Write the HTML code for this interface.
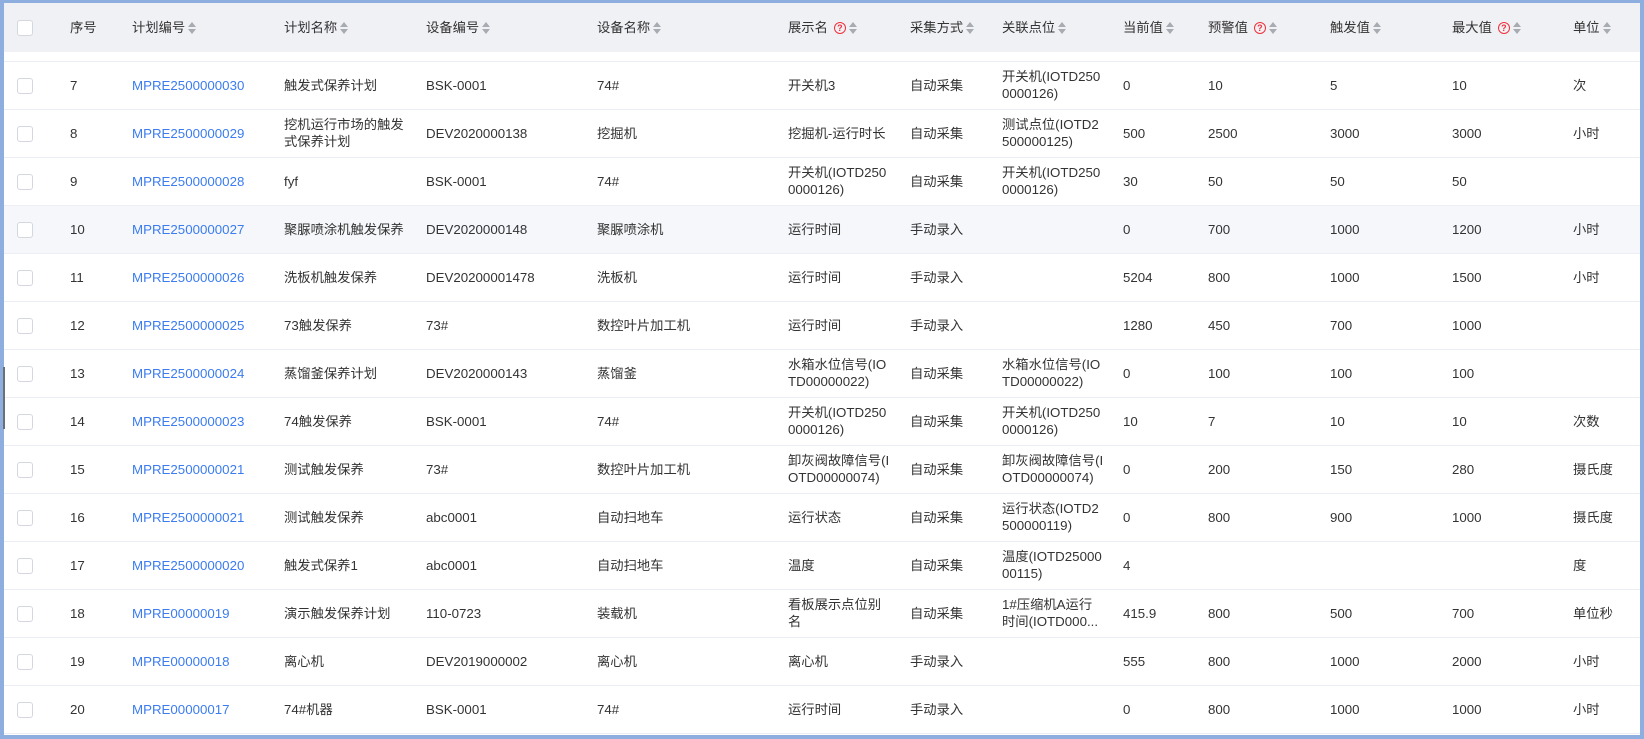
<!DOCTYPE html>
<html><head><meta charset="utf-8">
<style>
*{box-sizing:border-box;margin:0;padding:0}
html,body{width:1644px;height:739px;overflow:hidden;background:#8eaee0}
body{font-family:"Liberation Sans","Noto Sans CJK SC",sans-serif;font-size:13.3px;color:#333}
.frame{position:absolute;left:4px;top:3px;width:1636px;height:732px;background:#fff;overflow:hidden}
table{border-collapse:collapse;table-layout:fixed;width:1636px}
td,th{padding:0;text-align:left;vertical-align:middle;white-space:nowrap;font-weight:normal;line-height:17px}
thead th{background:#f0f1f5;height:49px;color:#333}
tr.gap td{height:9px;border-bottom:1px solid #ebeef5}
tbody tr.r td{height:48px;border-bottom:1px solid #ebeef5}
tr.hl td{background:#f5f7fa}
.cb{display:inline-block;width:16px;height:16px;border:1px solid #d4d7de;border-radius:3px;background:#fff;margin-left:13px;vertical-align:middle}
a{color:#3b7cf0;text-decoration:none}
.s{display:inline-block;width:8px;height:12px;position:relative;vertical-align:middle;margin-left:3px}
.s:before{content:"";position:absolute;left:0;top:0;border-left:4px solid transparent;border-right:4px solid transparent;border-bottom:5px solid #a8abb2}
.s:after{content:"";position:absolute;left:0;bottom:0;border-left:4px solid transparent;border-right:4px solid transparent;border-top:5px solid #a8abb2}
.q{display:inline-block;width:12px;height:12px;border:1.3px solid #f0303a;border-radius:50%;color:#f0303a;font-size:9px;line-height:10px;text-align:center;font-weight:bold;vertical-align:middle;margin-left:6px}
.bar{position:absolute;left:3px;top:367px;width:2px;height:62px;background:#6b6f78}
</style></head><body>
<div class="frame">
<table>
<colgroup><col style="width:66px"><col style="width:62px"><col style="width:152px"><col style="width:142px"><col style="width:171px"><col style="width:191px"><col style="width:122px"><col style="width:92px"><col style="width:121px"><col style="width:85px"><col style="width:122px"><col style="width:122px"><col style="width:121px"><col style="width:67px"></colgroup>
<thead><tr>
<th><span class="cb"></span></th><th>序号</th><th>计划编号<span class="s"></span></th><th>计划名称<span class="s"></span></th><th>设备编号<span class="s"></span></th><th>设备名称<span class="s"></span></th><th>展示名<span class="q">?</span><span class="s"></span></th><th>采集方式<span class="s"></span></th><th>关联点位<span class="s"></span></th><th>当前值<span class="s"></span></th><th>预警值<span class="q">?</span><span class="s"></span></th><th>触发值<span class="s"></span></th><th>最大值<span class="q">?</span><span class="s"></span></th><th>单位<span class="s"></span></th>
</tr></thead>
<tbody>
<tr class="gap"><td colspan="14"></td></tr>
<tr class="r"><td><span class="cb"></span></td><td>7</td><td><a>MPRE2500000030</a></td><td>触发式保养计划</td><td>BSK-0001</td><td>74#</td><td>开关机3</td><td>自动采集</td><td>开关机(IOTD250<br>0000126)</td><td>0</td><td>10</td><td>5</td><td>10</td><td>次</td></tr>
<tr class="r"><td><span class="cb"></span></td><td>8</td><td><a>MPRE2500000029</a></td><td>挖机运行市场的触发<br>式保养计划</td><td>DEV2020000138</td><td>挖掘机</td><td>挖掘机-运行时长</td><td>自动采集</td><td>测试点位(IOTD2<br>500000125)</td><td>500</td><td>2500</td><td>3000</td><td>3000</td><td>小时</td></tr>
<tr class="r"><td><span class="cb"></span></td><td>9</td><td><a>MPRE2500000028</a></td><td>fyf</td><td>BSK-0001</td><td>74#</td><td>开关机(IOTD250<br>0000126)</td><td>自动采集</td><td>开关机(IOTD250<br>0000126)</td><td>30</td><td>50</td><td>50</td><td>50</td><td></td></tr>
<tr class="r hl"><td><span class="cb"></span></td><td>10</td><td><a>MPRE2500000027</a></td><td>聚脲喷涂机触发保养</td><td>DEV2020000148</td><td>聚脲喷涂机</td><td>运行时间</td><td>手动录入</td><td></td><td>0</td><td>700</td><td>1000</td><td>1200</td><td>小时</td></tr>
<tr class="r"><td><span class="cb"></span></td><td>11</td><td><a>MPRE2500000026</a></td><td>洗板机触发保养</td><td>DEV20200001478</td><td>洗板机</td><td>运行时间</td><td>手动录入</td><td></td><td>5204</td><td>800</td><td>1000</td><td>1500</td><td>小时</td></tr>
<tr class="r"><td><span class="cb"></span></td><td>12</td><td><a>MPRE2500000025</a></td><td>73触发保养</td><td>73#</td><td>数控叶片加工机</td><td>运行时间</td><td>手动录入</td><td></td><td>1280</td><td>450</td><td>700</td><td>1000</td><td></td></tr>
<tr class="r"><td><span class="cb"></span></td><td>13</td><td><a>MPRE2500000024</a></td><td>蒸馏釜保养计划</td><td>DEV2020000143</td><td>蒸馏釜</td><td>水箱水位信号(IO<br>TD00000022)</td><td>自动采集</td><td>水箱水位信号(IO<br>TD00000022)</td><td>0</td><td>100</td><td>100</td><td>100</td><td></td></tr>
<tr class="r"><td><span class="cb"></span></td><td>14</td><td><a>MPRE2500000023</a></td><td>74触发保养</td><td>BSK-0001</td><td>74#</td><td>开关机(IOTD250<br>0000126)</td><td>自动采集</td><td>开关机(IOTD250<br>0000126)</td><td>10</td><td>7</td><td>10</td><td>10</td><td>次数</td></tr>
<tr class="r"><td><span class="cb"></span></td><td>15</td><td><a>MPRE2500000021</a></td><td>测试触发保养</td><td>73#</td><td>数控叶片加工机</td><td>卸灰阀故障信号(I<br>OTD00000074)</td><td>自动采集</td><td>卸灰阀故障信号(I<br>OTD00000074)</td><td>0</td><td>200</td><td>150</td><td>280</td><td>摄氏度</td></tr>
<tr class="r"><td><span class="cb"></span></td><td>16</td><td><a>MPRE2500000021</a></td><td>测试触发保养</td><td>abc0001</td><td>自动扫地车</td><td>运行状态</td><td>自动采集</td><td>运行状态(IOTD2<br>500000119)</td><td>0</td><td>800</td><td>900</td><td>1000</td><td>摄氏度</td></tr>
<tr class="r"><td><span class="cb"></span></td><td>17</td><td><a>MPRE2500000020</a></td><td>触发式保养1</td><td>abc0001</td><td>自动扫地车</td><td>温度</td><td>自动采集</td><td>温度(IOTD25000<br>00115)</td><td>4</td><td></td><td></td><td></td><td>度</td></tr>
<tr class="r"><td><span class="cb"></span></td><td>18</td><td><a>MPRE00000019</a></td><td>演示触发保养计划</td><td>110-0723</td><td>装载机</td><td>看板展示点位别<br>名</td><td>自动采集</td><td>1#压缩机A运行<br>时间(IOTD000...</td><td>415.9</td><td>800</td><td>500</td><td>700</td><td>单位秒</td></tr>
<tr class="r"><td><span class="cb"></span></td><td>19</td><td><a>MPRE00000018</a></td><td>离心机</td><td>DEV2019000002</td><td>离心机</td><td>离心机</td><td>手动录入</td><td></td><td>555</td><td>800</td><td>1000</td><td>2000</td><td>小时</td></tr>
<tr class="r"><td><span class="cb"></span></td><td>20</td><td><a>MPRE00000017</a></td><td>74#机器</td><td>BSK-0001</td><td>74#</td><td>运行时间</td><td>手动录入</td><td></td><td>0</td><td>800</td><td>1000</td><td>1000</td><td>小时</td></tr>
</tbody></table>
</div>
<div class="bar"></div>
</body></html>
